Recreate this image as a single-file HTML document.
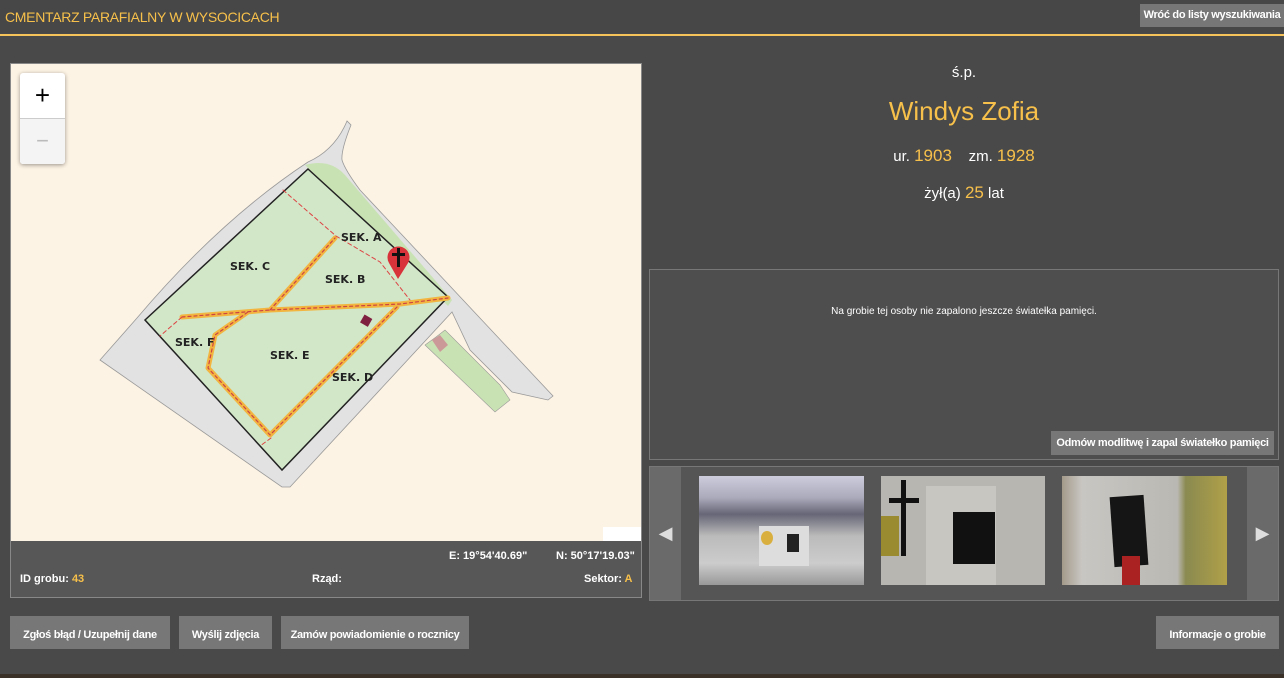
<!DOCTYPE html>
<html><head><meta charset="utf-8"><style>
*{margin:0;padding:0;box-sizing:border-box}
body{width:1284px;height:678px;background:#494949;font-family:"Liberation Sans",sans-serif;position:relative;overflow:hidden;color:#fff}
.abs{position:absolute}
.btn{position:absolute;background:#777;color:#fff;font-size:11px;font-weight:bold;text-align:center;letter-spacing:-0.3px}
.y{color:#f7c04a}
</style></head><body>
<div class="abs" style="left:0;top:0;width:1284px;height:33px;background:#474747"></div>
<div class="abs" style="left:5px;top:9px;font-size:14px;color:#f7c04a;letter-spacing:-0.3px">CMENTARZ PARAFIALNY W WYSOCICACH</div>
<div class="btn" style="left:1140px;top:4px;width:144px;height:23px;line-height:23px">Wróć do listy wyszukiwania</div>
<div class="abs" style="left:0;top:34px;width:1284px;height:2px;background:#f5c35a"></div>
<div class="abs" style="left:0;top:674px;width:1284px;height:4px;background:#3a3128"></div>

<!-- map box -->
<div class="abs" style="left:10px;top:63px;width:632px;height:535px;border:1px solid #888;background:#575757"></div>
<div class="abs" style="left:11px;top:64px;width:630px;height:477px;background:#fdf3e4;overflow:hidden">
<svg width="630" height="477" viewBox="11 64 630 477" style="position:absolute;left:0;top:0">
 <path d="M100,360 L137,318 Q220,220 308,162 Q335,150 347,121 L351,125 Q341,150 342,160 Q345,170 360,190 L553,396 L548,400 L512,392 L470,350 L452,312 L290,487 L282,487 Z" fill="#e2e2e2" stroke="#999" stroke-width="0.8"/>
 <path d="M305,165 Q330,158 345,175 L452,300 L448,306 Z" fill="#c9e2b4"/>
 <path d="M436,337 L445,330 L500,385 L510,400 L495,412 L425,345 Z" fill="#c9e2b4" stroke="#999" stroke-width="0.6"/>
 <path d="M432,340 L440,335 L448,345 L440,352 Z" fill="#c99" />
 <path d="M308,169 L448,297 L282,470 L145,320 Z" fill="#d2e6c8" stroke="#222" stroke-width="1.5"/>
 <g fill="none" stroke-linecap="round" stroke-linejoin="round">
  <path d="M182,317 L270,310 L400,304 L448,298 M397,307 L270,435 L208,368 L215,335 L248,312 M270,310 L335,238" stroke="#f2b53f" stroke-width="5"/>
  <path d="M182,317 L270,310 L400,304 L448,298 M397,307 L270,435 L208,368 L215,335 L248,312 M270,310 L335,238" stroke="#c44" stroke-width="1.2" stroke-dasharray="3,3"/>
  <path d="M283,190 L336,236 L380,262 L410,300 M182,317 L160,336 M271,438 L260,446" stroke="#d44" stroke-width="1" stroke-dasharray="4,3"/>
 </g>
 <rect x="362" y="316" width="9" height="9" fill="#802040" transform="rotate(30 366 320)"/>
 <g font-family="DejaVu Sans,sans-serif" font-weight="bold" font-size="11" fill="#222">
  <text x="341" y="241">SEK. A</text><text x="230" y="270">SEK. C</text><text x="325" y="283">SEK. B</text>
  <text x="175" y="346">SEK. F</text><text x="270" y="359">SEK. E</text><text x="332" y="381">SEK. D</text>
 </g>
 <path d="M398,279 L389,263 A11,11 0 1 1 408,263 Z" fill="#d8323a"/>
 <rect x="397" y="248" width="3" height="19" fill="#111"/><rect x="392" y="253" width="13" height="3" fill="#111"/>
</svg>
<div class="abs" style="left:9px;top:9px;width:45px;height:91px;background:#fff;border-radius:3px;box-shadow:0 1px 4px rgba(0,0,0,.4)"></div>
<div class="abs" style="left:9px;top:9px;width:45px;height:45px;text-align:center;line-height:44px;font-size:26px;color:#000">+</div>
<div class="abs" style="left:9px;top:54px;width:45px;height:46px;background:#f4f4f4;border-top:1px solid #ccc;border-radius:0 0 3px 3px;text-align:center;line-height:44px;font-size:22px;color:#bbb">−</div>
<div class="abs" style="left:592px;top:463px;width:38px;height:14px;background:#fff"></div>
</div>
<div class="abs" style="left:449px;top:550px;font-size:11px;font-weight:bold">E: 19°54'40.69"</div>
<div class="abs" style="left:556px;top:550px;font-size:11px;font-weight:bold">N: 50°17'19.03"</div>
<div class="abs" style="left:20px;top:573px;font-size:11px;font-weight:bold">ID grobu: <span class="y">43</span></div>
<div class="abs" style="left:312px;top:573px;font-size:11px;font-weight:bold">Rząd:</div>
<div class="abs" style="left:584px;top:573px;font-size:11px;font-weight:bold">Sektor: <span class="y">A</span></div>

<div class="btn" style="left:10px;top:616px;width:160px;height:33px;line-height:38px">Zgłoś błąd / Uzupełnij dane</div>
<div class="btn" style="left:179px;top:616px;width:93px;height:33px;line-height:38px">Wyślij zdjęcia</div>
<div class="btn" style="left:281px;top:616px;width:188px;height:33px;line-height:38px">Zamów powiadomienie o rocznicy</div>
<div class="btn" style="left:1156px;top:616px;width:123px;height:33px;line-height:38px">Informacje o grobie</div>

<!-- right -->
<div class="abs" style="left:649px;top:64px;width:630px;text-align:center;font-size:15px">ś.p.</div>
<div class="abs y" style="left:649px;top:96px;width:630px;text-align:center;font-size:26px">Windys Zofia</div>
<div class="abs" style="left:649px;top:146px;width:630px;text-align:center;font-size:15px">ur. <span class="y" style="font-size:17px">1903</span>&nbsp;&nbsp;&nbsp; zm. <span class="y" style="font-size:17px">1928</span></div>
<div class="abs" style="left:649px;top:183px;width:630px;text-align:center;font-size:15px">żył(a) <span class="y" style="font-size:17px">25</span> lat</div>

<div class="abs" style="left:649px;top:269px;width:630px;height:191px;border:1px solid #777;background:#4e4e4e"></div>
<div class="abs" style="left:649px;top:306px;width:630px;text-align:center;font-size:10px">Na grobie tej osoby nie zapalono jeszcze światełka pamięci.</div>
<div class="btn" style="left:1051px;top:431px;width:223px;height:24px;line-height:24px">Odmów modlitwę i zapal światełko pamięci</div>

<div class="abs" style="left:649px;top:466px;width:630px;height:135px;border:1px solid #777;background:#555"></div>
<div class="abs" style="left:650px;top:467px;width:31px;height:133px;background:#6a6a6a;color:#ddd;font-size:18px;line-height:133px;text-align:center">◀</div>
<div class="abs" style="left:1247px;top:467px;width:31px;height:133px;background:#6a6a6a;color:#ddd;font-size:18px;line-height:133px;text-align:center">▶</div>
<div class="abs" style="left:699px;top:476px;width:165px;height:109px;background:linear-gradient(#ccd 0,#aab 20%,#667 35%,#bbb 55%,#ccc 80%,#999 100%)">
 <div class="abs" style="left:60px;top:50px;width:50px;height:40px;background:#ddd"></div>
 <div class="abs" style="left:88px;top:58px;width:12px;height:18px;background:#222"></div>
 <div class="abs" style="left:62px;top:55px;width:12px;height:14px;background:#d9b040;border-radius:50%"></div>
</div>
<div class="abs" style="left:881px;top:476px;width:164px;height:109px;background:#b8b6b0">
 <div class="abs" style="left:45px;top:10px;width:70px;height:99px;background:#c8c6c0"></div>
 <div class="abs" style="left:72px;top:36px;width:42px;height:52px;background:#111"></div>
 <div class="abs" style="left:20px;top:4px;width:5px;height:76px;background:#111"></div>
 <div class="abs" style="left:8px;top:22px;width:30px;height:5px;background:#111"></div>
 <div class="abs" style="left:0;top:40px;width:18px;height:40px;background:#9a8a30"></div>
</div>
<div class="abs" style="left:1062px;top:476px;width:165px;height:109px;background:linear-gradient(90deg,#a49a8a 0,#c8c6c2 12%,#bab8b2 70%,#8a8a50 75%,#b0a048 100%)">
 <div class="abs" style="left:50px;top:20px;width:34px;height:70px;background:#151515;transform:rotate(-4deg)"></div>
 <div class="abs" style="left:60px;top:80px;width:18px;height:29px;background:#a22"></div>
</div>
</body></html>
